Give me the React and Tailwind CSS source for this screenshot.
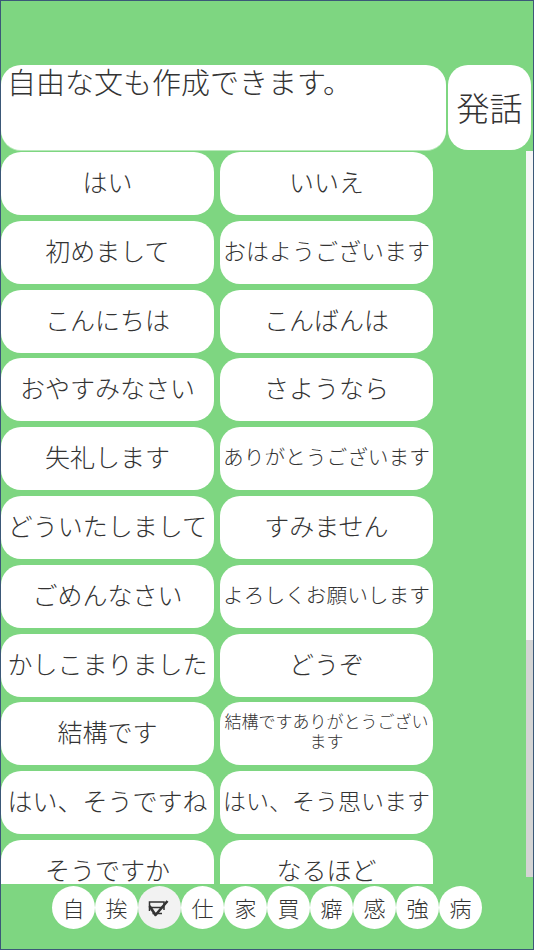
import React from "react";

const items = [
  ["はい", 25],
  ["いいえ", 25],
  ["初めまして", 25],
  ["おはようございます", 23],
  ["こんにちは", 25],
  ["こんばんは", 25],
  ["おやすみなさい", 25],
  ["さようなら", 25],
  ["失礼します", 25],
  ["ありがとうございます", 20.7],
  ["どういたしまして", 25],
  ["すみません", 25],
  ["ごめんなさい", 25],
  ["よろしくお願いします", 20.7],
  ["かしこまりました", 25],
  ["どうぞ", 25],
  ["結構です", 25],
  ["結構ですありがとうございます", 17],
  ["はい、そうですね", 25],
  ["はい、そう思います", 23],
  ["そうですか", 25],
  ["なるほど", 25],
];

const tabs = ["自", "挨", "check", "仕", "家", "買", "癖", "感", "強", "病"];

function CheckIcon() {
  return (
    <svg width="43" height="43" viewBox="0 0 43 43" fill="none" stroke="#333">
      <path d="M11.5 25 V16 H26 V24" strokeWidth="1.5" />
      <path d="M11.5 21.5 H26" strokeWidth="1.5" />
      <path d="M14.5 27.5 H24" strokeWidth="1.5" />
      <path d="M11.5 20 L17.5 29 L29.5 15" strokeWidth="2.6" strokeLinejoin="round" />
    </svg>
  );
}

export default function App() {
  return (
    <div className="w-[534px] h-[950px] border border-[#3b5878] bg-[#7ed681] flex flex-col overflow-hidden font-['Noto_Sans_CJK_JP','Noto_Sans',sans-serif] font-light text-[#333]">
      <div className="h-[64px] shrink-0" />
      <div className="flex h-[85px] shrink-0 gap-[2px]">
        <div className="w-[445px] bg-white rounded-[20px] text-[29px] leading-[32px] pl-[6px] pt-0 shadow-[0_1px_0_rgba(255,255,255,0.45)]">
          自由な文も作成できます。
        </div>
        <div className="w-[83px] bg-white rounded-[20px] flex items-center justify-center text-[33px] leading-none">
          発話
        </div>
      </div>
      <div className="h-[734px] shrink-0 flex overflow-hidden">
        <div className="grid grid-cols-[213px_213px] gap-x-[6px] gap-y-[5.8px] auto-rows-[63px] pt-[2px]">
          {items.map(([t, s], i) => (
            <div
              key={i}
              className="bg-white rounded-[20px] flex items-center justify-center text-center leading-[20px] px-[3px] pb-[5px]"
              style={{ fontSize: `${s}px` }}
            >
              {t}
            </div>
          ))}
        </div>
        <div className="ml-auto mt-[1px] w-[7px] h-[726px] bg-[#f6f6f6] flex flex-col justify-end">
          <div className="h-[237px] bg-[#d4d4d4]" />
        </div>
      </div>
      <div className="flex-1 flex justify-center items-start pt-[2px]">
        {tabs.map((t, i) => (
          <div
            key={i}
            className={
              t === "check"
                ? "w-[43px] h-[43px] rounded-full bg-[#f2f2f2] flex items-center justify-center"
                : "w-[43px] h-[43px] rounded-full bg-white flex items-center justify-center text-[22px] leading-none pb-[2px]"
            }
          >
            {t === "check" ? <CheckIcon /> : t}
          </div>
        ))}
      </div>
    </div>
  );
}
